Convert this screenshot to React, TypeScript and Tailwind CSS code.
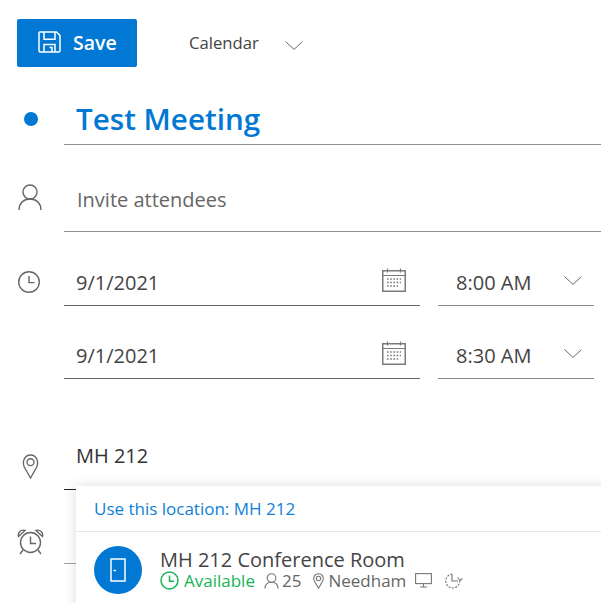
const FONT = "font-['Open_Sans','Noto_Sans',sans-serif]";

function Chevron({ className }: { className?: string }) {
  return (
    <svg width="18" height="9" viewBox="0 0 18 9" fill="none" stroke="currentColor" strokeWidth="1" className={className}>
      <path d="M0.6 0.6L9 8.4L17.4 0.6" />
    </svg>
  );
}

function CalendarIcon() {
  return (
    <svg width="24" height="24" viewBox="0 0 24 24" fill="none" className="text-[#7a7a7a] -mt-[6px]">
      <rect x="0.75" y="2.75" width="22.5" height="20.5" stroke="currentColor" strokeWidth="1.5" />
      <path d="M1 7.5H23" stroke="currentColor" strokeWidth="1" />
      <path d="M5.5 0.5V4.5M18.5 0.5V4.5" stroke="currentColor" strokeWidth="1.2" />
      <path d="M5 11H19M5 14.5H19M5 18H16" stroke="currentColor" strokeWidth="1.6" strokeDasharray="1.6 1.6" />
    </svg>
  );
}

function DateTimeRow({ date, time, icon, height }: { date: string; time: string; icon?: boolean; height: string }) {
  return (
    <div className={`flex items-end ${height}`}>
      <div className="w-[64px] h-full relative shrink-0">
        {icon && (
          <svg width="24" height="24" viewBox="0 0 24 24" fill="none" stroke="#666666" strokeWidth="1.4" className="absolute left-[17px] top-[38px]">
            <circle cx="12" cy="12" r="10.3" />
            <path d="M12 6V12.6H17.5" />
          </svg>
        )}
      </div>
      <div className="w-[356px] h-[45px] border-b border-[#666666] flex items-center justify-between pl-[12px] pr-[14px]">
        <span className="text-[20px] text-[#444444]">{date}</span>
        <CalendarIcon />
      </div>
      <div className="ml-[18px] w-[156px] h-[45px] border-b border-[#8a8a8a] flex items-center justify-between pl-[18px] pr-[12px]">
        <span className="text-[20px] text-[#444444]">{time}</span>
        <Chevron className="text-[#666666] -mt-[6px]" />
      </div>
    </div>
  );
}

export default function App() {
  return (
    <div className={`${FONT} w-[601px] h-[603px] bg-white overflow-hidden relative`}>
      {/* toolbar */}
      <div className="flex items-center pt-[19px] pl-[17px]">
        <button className="w-[120px] h-[48px] bg-[#0078d4] rounded-[2px] flex items-center pl-[21px] gap-[12px] text-white">
          <svg width="23" height="22" viewBox="0 0 23 22" fill="none" stroke="white" strokeWidth="1.5" className="-mt-[2px]">
            <path d="M1.75 1H18.5L22 4.5V19.5C22 20.4 21.3 21 20.5 21H3C2 21 1 20.2 1 19.2V1.75Z" />
            <path d="M6 1.2V8.2H17V1.2" />
            <path d="M6 21V13.5H17V21" />
            <path d="M11.5 16.5H14V21" />
          </svg>
          <span className="text-[19.5px] font-semibold leading-none">Save</span>
        </button>
        <span className="ml-[52px] text-[16.7px] text-[#444444] -mt-[1px]">Calendar</span>
        <Chevron className="ml-[26px] text-[#666666] mt-[5px]" />
      </div>

      {/* title */}
      <div className="flex mt-[27px] h-[51px]">
        <div className="w-[64px] shrink-0 flex justify-start pl-[24px] pt-[18px]">
          <div className="w-[14px] h-[14px] rounded-full bg-[#0078d4]" />
        </div>
        <div className="flex-1 border-b border-[#8f8f8f] pl-[12px] text-[29.6px] leading-[49px] text-[#0078d4] font-semibold">
          Test Meeting
        </div>
      </div>

      {/* attendees */}
      <div className="flex h-[87px]">
        <div className="w-[64px] shrink-0 pl-[18px] pt-[39px]">
          <svg width="24" height="27" viewBox="0 0 24 27" fill="none" stroke="#666666" strokeWidth="1.4">
            <circle cx="12" cy="8" r="7" />
            <path d="M1 26C1 19.5 5.5 15 12 15C18.5 15 23 19.5 23 26" />
          </svg>
        </div>
        <div className="flex-1 border-b border-[#8f8f8f] pl-[13px] pt-[40px] text-[20px] leading-[30px] text-[#666666]">
          Invite attendees
        </div>
      </div>

      <DateTimeRow date="9/1/2021" time="8:00 AM" icon height="h-[74px]" />
      <DateTimeRow date="9/1/2021" time="8:30 AM" height="h-[73px]" />

      {/* location */}
      <div className="flex h-[111px]">
        <div className="w-[64px] shrink-0 pl-[22px] pt-[75px]">
          <svg width="17" height="25" viewBox="0 0 17 26" fill="none" stroke="#666666" strokeWidth="1.4">
            <path d="M8.5 25L2 13.5C0 9 1.5 1 8.5 1C15.5 1 17 9 15 13.5Z" />
            <circle cx="8.5" cy="8.5" r="3.6" />
          </svg>
        </div>
        <div className="flex-1 border-b border-[#222222] pl-[12px] pt-[62px] text-[20px] leading-[30px] text-[#333333]">
          MH 212
        </div>
      </div>

      {/* reminder */}
      <div className="flex h-[74px]">
        <div className="w-[64px] shrink-0 pl-[17px] pt-[39px]">
          <svg width="27" height="26" viewBox="0 0 27 26" fill="none" stroke="#666666" strokeWidth="1.4">
            <circle cx="13.5" cy="13.5" r="10" />
            <path d="M13.5 7.5V14.5H19" />
            <path d="M1.5 7.5C0.5 3.5 4 0 8 1.5Z" />
            <path d="M25.5 7.5C26.5 3.5 23 0 19 1.5Z" />
            <path d="M6 21L3 25M21 21L24 25" />
          </svg>
        </div>
        <div className="flex-1 border-b border-[#a0a0a0]" />
      </div>

      {/* location suggestions */}
      <div className="absolute left-[76px] top-[486px] w-[540px] h-[130px] bg-white shadow-[0_0_12px_rgba(0,0,0,0.14)]">
        <div className="h-[46px] border-b border-[#e6e6e6] pl-[18px] pt-[8px] text-[17px] leading-[30px] text-[#0f7fd6]">
          Use this location: MH 212
        </div>
        <div className="flex pl-[18px] pt-[14px]">
          <div className="w-[48px] h-[48px] rounded-full bg-[#0078d4] flex items-center justify-center shrink-0">
            <svg width="16" height="24" viewBox="0 0 16 24" fill="none" stroke="white" strokeWidth="1.5">
              <rect x="1" y="1" width="14" height="22" />
              <path d="M3.5 12.5H6" />
            </svg>
          </div>
          <div className="ml-[18px] mt-[2px]">
            <div className="text-[20px] leading-[23px] text-[#444444]">MH 212 Conference Room</div>
            <div className="flex items-center text-[17px] leading-[19px] text-[#666666]">
              <svg width="19" height="19" viewBox="0 0 19 19" fill="none" stroke="#16b454" strokeWidth="1.5">
                <circle cx="9.5" cy="9.5" r="8.5" />
                <path d="M9.5 4.5V10.2H14" />
              </svg>
              <span className="ml-[5px] text-[#16b454]">Available</span>
              <svg width="15" height="16" viewBox="0 0 15 16" fill="none" stroke="#777777" strokeWidth="1.1" className="ml-[9px]">
                <circle cx="7.5" cy="5" r="4.3" />
                <path d="M1 15.5C1 11.5 3.5 9.3 7.5 9.3C11.5 9.3 14 11.5 14 15.5" />
              </svg>
              <span className="ml-[3px]">25</span>
              <svg width="11" height="16" viewBox="0 0 11 16" fill="none" stroke="#777777" strokeWidth="1.1" className="ml-[12px]">
                <path d="M5.5 15.3L1.3 8C0 5 1 0.7 5.5 0.7C10 0.7 11 5 9.7 8Z" />
                <circle cx="5.5" cy="5.5" r="2.2" />
              </svg>
              <span className="ml-[4px]">Needham</span>
              <svg width="17" height="15" viewBox="0 0 17 15" fill="none" stroke="#777777" strokeWidth="1.1" className="ml-[9px]">
                <rect x="0.6" y="0.6" width="15.8" height="10" />
                <path d="M8.5 10.6V14M5 14H12" />
              </svg>
              <svg width="19" height="17" viewBox="0 0 19 17" fill="none" stroke="#777777" strokeWidth="1.1" strokeDasharray="2.2 1.2" className="ml-[12px]">
                <path d="M15.8 8.5A7 7 0 1 1 8 2" />
                <path d="M8 2V9H14" strokeDasharray="none" />
                <path d="M13.5 5.5L16 8.5L18.5 6.5" strokeDasharray="none" />
              </svg>
            </div>
          </div>
        </div>
      </div>
    </div>
  );
}
